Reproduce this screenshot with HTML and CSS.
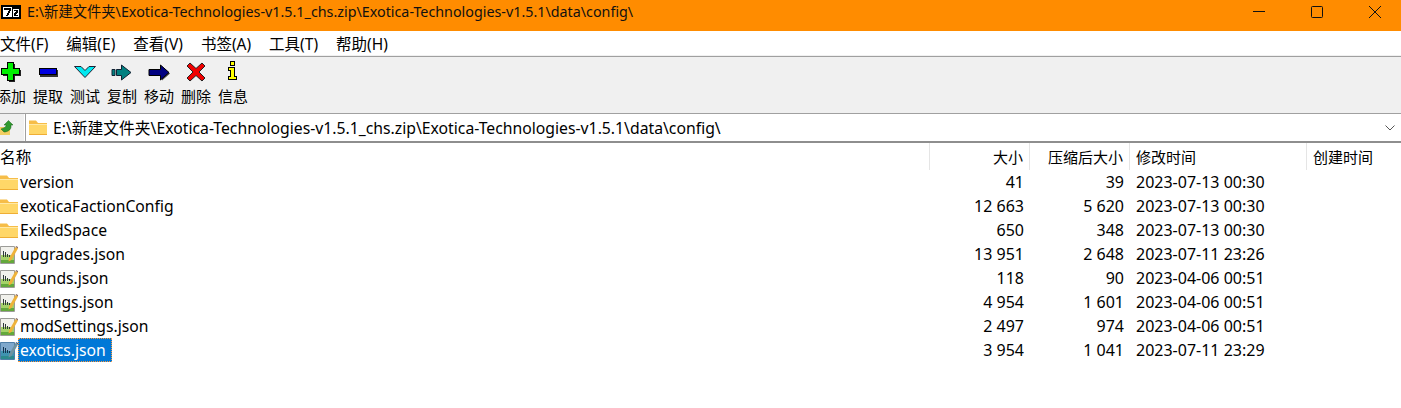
FILE: index.html
```html
<!DOCTYPE html>
<html lang="zh-CN">
<head>
    <meta charset="UTF-8">
    <title>7-Zip</title>
    <link rel="stylesheet" href="styles.css">
</head>
<body>
    <svg class="defs" width="0" height="0">
        <defs>
            <symbol id="folder" viewBox="0 0 18 15">
                <path d="M0 0.500h7l2 2.500h9v12H0z" fill="#f6bd48"/>
                <path d="M0 4h18v11H0z" fill="#ffd768"/>
                <path d="M0 4h18v1H0z" fill="#ffe9a6"/>
                <path d="M0 14h18v1H0z" fill="#efae35"/>
            </symbol>
            <symbol id="jsonfile" viewBox="0 0 18 19">
                <path d="M0.500 1.500h14v17H0.500z" fill="#f1f1ec" stroke="#9c9c98"/>
                <path d="M1 10h13v8H1z" fill="#a4d268"/>
                <path d="M1 15h13v3H1z" fill="#63a83c"/>
                <path d="M3 6h1v6H3zM5 7h1v5H5zM7 9h1v3H7zM9 10h1v2H9z" fill="#2e3a3a"/>
                <path d="M9 13.500L15.500 2l2.500 1.500L11.500 15 8.500 16.500z" fill="#eeb23a"/>
                <path d="M15.500 2l0.600-1 2.400 1.400-0.500 1.100z" fill="#8d6e63"/>
            </symbol>
            <symbol id="jsonfile-sel" viewBox="0 0 18 19">
                <path d="M0.500 1.500h14v17H0.500z" fill="#7fa8cc" stroke="#4f7fa8"/>
                <path d="M1 10h13v8H1z" fill="#3f93b0"/>
                <path d="M1 15h13v3H1z" fill="#2c8a8c"/>
                <path d="M3 6h1v6H3zM5 7h1v5H5zM7 9h1v3H7zM9 10h1v2H9z" fill="#12344e"/>
                <path d="M9 13.500L15.500 2l2.500 1.500L11.500 15 8.500 16.500z" fill="#6f93a0"/>
                <path d="M15.500 2l0.600-1 2.400 1.400-0.500 1.100z" fill="#3e5f80"/>
            </symbol>
        </defs>
    </svg>

    <div class="titlebar">
        <svg class="app-logo pixel" width="20" height="14" viewBox="0 0 20 14">
            <path d="M0 0h20v14H0z" fill="#000"/>
            <path d="M2 2h9v10H2zM12 4h6v8h-6z" fill="#fff"/>
            <path d="M3 3h7v2l-3 6H5l3-6H3zM13 5h4v2l-2 3h2v1h-4V9l2-3h-2z" fill="#000"/>
        </svg>
        <span class="title-text">E:\新建文件夹\Exotica-Technologies-v1.5.1_chs.zip\Exotica-Technologies-v1.5.1\data\config\</span>
        <div class="window-btns">
            <svg width="12" height="12" viewBox="0 0 12 12"><path d="M0 5.500h12" stroke="#111" fill="none"/></svg>
            <svg width="12" height="12" viewBox="0 0 12 12"><rect x="0.500" y="0.500" width="11" height="11" rx="1" stroke="#111" fill="none"/></svg>
            <svg width="12" height="12" viewBox="0 0 12 12"><path d="M0 0l12 12M12 0L0 12" stroke="#111" fill="none"/></svg>
        </div>
    </div>

    <div class="menubar">
        <span>文件(F)</span>
        <span>编辑(E)</span>
        <span>查看(V)</span>
        <span>书签(A)</span>
        <span>工具(T)</span>
        <span>帮助(H)</span>
    </div>

    <div class="toolbar">
        <div class="tool">
            <svg class="pixel" width="22" height="22" viewBox="0 0 22 22"><path d="M9 3h6v6h6v6h-6v6H9v-6H3V9h6z" fill="#222"/><path d="M7.500 1.500h6v6h6v6h-6v6h-6v-6h-6v-6h6z" fill="#00f000" stroke="#000"/></svg>
            <span>添加</span>
        </div>
        <div class="tool">
            <svg class="pixel" width="22" height="22" viewBox="0 0 22 22"><path d="M3 9h18v7H3z" fill="#333"/><path d="M2.500 7.500h17v6h-17z" fill="#0000e0" stroke="#000"/></svg>
            <span>提取</span>
        </div>
        <div class="tool">
            <svg width="22" height="22" viewBox="0 0 22 22"><path d="M0.500 5.500h6.500l4 4 4-4h6.500L11 16.500z" fill="#00e8f0" stroke="#223"/></svg>
            <span>测试</span>
        </div>
        <div class="tool">
            <svg width="22" height="22" viewBox="0 0 22 22"><path d="M1 8.500h3v6H1zM5.500 8.500h5V4l9.500 7.500-9.500 7.500v-4.500h-5z" fill="#008080" stroke="#123"/></svg>
            <span>复制</span>
        </div>
        <div class="tool">
            <svg width="22" height="22" viewBox="0 0 22 22"><path d="M2 10h12V5.500l8 7-8 7V15H2z" fill="#444"/><path d="M1 8.500h11.500V4l8.500 7.500-8.500 7.500v-4.500H1z" fill="#000080" stroke="#000"/></svg>
            <span>移动</span>
        </div>
        <div class="tool">
            <svg width="22" height="22" viewBox="0 0 22 22"><path d="M5 2l6 5.500L17 2l3 3-6 6 6 6-3 3-6-5.500L5 20l-3-3 6-6-6-6z" fill="#f00000" stroke="#222"/></svg>
            <span>删除</span>
        </div>
        <div class="tool">
            <svg class="pixel" width="22" height="22" viewBox="0 0 22 22"><path d="M8.500 0.500h4v4h-4zM6.500 6.500h6v9h2v3h-8v-3h2v-6h-2z" fill="#ffff00" stroke="#000"/></svg>
            <span>信息</span>
        </div>
    </div>

    <div class="addressbar">
        <div class="up-btn">
            <svg width="14" height="16" viewBox="0 0 14 16"><path d="M0 7h4l1 1h5v7H0z" fill="#f2cf62"/><path d="M1 9c2-1 4-1 5-3V5H4l4.500-4.500L13 5h-2v2c0 3-4 5-7 5z" fill="#2f9a2f" stroke="#1b5e1b" stroke-width="0.500"/></svg>
        </div>
        <div class="path-box">
            <svg class="path-icon" width="18" height="15"><use href="#folder"/></svg>
            <span class="path-text">E:\新建文件夹\Exotica-Technologies-v1.5.1_chs.zip\Exotica-Technologies-v1.5.1\data\config\</span>
            <svg class="chevron" width="10" height="6" viewBox="0 0 10 6"><path d="M0.500 0.500L5 5l4.500-4.500" stroke="#555" fill="none"/></svg>
        </div>
    </div>

    <div class="list">
        <div class="row head">
            <div class="c-name">名称</div>
            <div class="c-size">大小</div>
            <div class="c-packed">压缩后大小</div>
            <div class="c-date">修改时间</div>
            <div class="c-created">创建时间</div>
        </div>
        <div class="row">
            <div class="c-name"><svg class="icon" width="18" height="15"><use href="#folder"/></svg><span>version</span></div>
            <div class="c-size">41</div><div class="c-packed">39</div><div class="c-date">2023-07-13 00:30</div><div class="c-created"></div>
        </div>
        <div class="row">
            <div class="c-name"><svg class="icon" width="18" height="15"><use href="#folder"/></svg><span>exoticaFactionConfig</span></div>
            <div class="c-size">12 663</div><div class="c-packed">5 620</div><div class="c-date">2023-07-13 00:30</div><div class="c-created"></div>
        </div>
        <div class="row">
            <div class="c-name"><svg class="icon" width="18" height="15"><use href="#folder"/></svg><span>ExiledSpace</span></div>
            <div class="c-size">650</div><div class="c-packed">348</div><div class="c-date">2023-07-13 00:30</div><div class="c-created"></div>
        </div>
        <div class="row">
            <div class="c-name"><svg class="icon" width="18" height="19"><use href="#jsonfile"/></svg><span>upgrades.json</span></div>
            <div class="c-size">13 951</div><div class="c-packed">2 648</div><div class="c-date">2023-07-11 23:26</div><div class="c-created"></div>
        </div>
        <div class="row">
            <div class="c-name"><svg class="icon" width="18" height="19"><use href="#jsonfile"/></svg><span>sounds.json</span></div>
            <div class="c-size">118</div><div class="c-packed">90</div><div class="c-date">2023-04-06 00:51</div><div class="c-created"></div>
        </div>
        <div class="row">
            <div class="c-name"><svg class="icon" width="18" height="19"><use href="#jsonfile"/></svg><span>settings.json</span></div>
            <div class="c-size">4 954</div><div class="c-packed">1 601</div><div class="c-date">2023-04-06 00:51</div><div class="c-created"></div>
        </div>
        <div class="row">
            <div class="c-name"><svg class="icon" width="18" height="19"><use href="#jsonfile"/></svg><span>modSettings.json</span></div>
            <div class="c-size">2 497</div><div class="c-packed">974</div><div class="c-date">2023-04-06 00:51</div><div class="c-created"></div>
        </div>
        <div class="row selected">
            <div class="c-name"><svg class="icon" width="18" height="19"><use href="#jsonfile-sel"/></svg><span>exotics.json</span></div>
            <div class="c-size">3 954</div><div class="c-packed">1 041</div><div class="c-date">2023-07-11 23:29</div><div class="c-created"></div>
        </div>
    </div>
</body>
</html>
```

FILE: styles.css
```css
html, body {
    margin: 0;
    padding: 0;
    height: 100%;
    overflow: hidden;
}
body {
    font-family: "Noto Sans", "Noto Sans CJK SC", sans-serif;
    font-size: 15px;
    color: #000;
    background-color: #fff;
}
.defs {
    display: block;
    height: 0;
}

.titlebar {
    height: 31px;
    background-color: #ff8c00;
    display: flex;
    align-items: center;
    padding-left: 1px;
    padding-bottom: 7px;
    box-sizing: border-box;
}
.app-logo {
    flex: none;
}
.title-text {
    margin-left: 6px;
    margin-bottom: 3px;
    font-size: 14.3px;
    color: #111;
}
.window-btns {
    margin-left: auto;
    display: flex;
    gap: 46px;
    padding-right: 20px;
}
.window-btns svg {
    display: block;
}

.menubar {
    height: 25px;
    display: flex;
    align-items: center;
    gap: 18px;
    box-sizing: border-box;
    border-bottom: 1px solid #f0f0f0;
    font-size: 15.5px;
    white-space: nowrap;
}
.toolbar {
    height: 58px;
    box-sizing: border-box;
    background-color: #f0f0f0;
    border-top: 1px solid #a0a0a0;
    border-bottom: 1px solid #a0a0a0;
    display: flex;
    padding-top: 4px;
}
.tool {
    flex: none;
    width: 37px;
    display: flex;
    flex-direction: column;
    align-items: center;
    white-space: nowrap;
}
.tool:first-child {
    margin-left: -7.5px;
}
.tool svg {
    display: block;
}
.tool span {
    margin-top: 2px;
    line-height: 22px;
    height: 22px;
}
.pixel {
    shape-rendering: crispEdges;
}

.addressbar {
    height: 27px;
    display: flex;
    background-color: #f0f0f0;
    font-size: 15.75px;
}
.up-btn {
    width: 25px;
    flex: none;
    display: flex;
    align-items: center;
    box-sizing: border-box;
    border-right: 1px solid #fff;
}
.path-box {
    flex: 1;
    background-color: #fff;
    border-left: 1px solid #a0a0a0;
    display: flex;
    align-items: center;
    padding-left: 3px;
    padding-right: 6px;
}
.path-icon {
    flex: none;
}
.path-text {
    margin-left: 6px;
}
.chevron {
    margin-left: auto;
}

.list {
    border-top: 2px solid #8e8e8e;
}
.row {
    display: flex;
    height: 24px;
    line-height: 24px;
    white-space: nowrap;
    font-size: 16px;
}
.row.head {
    height: 27px;
    line-height: 28px;
    font-size: 15px;
}
.row.head > div {
    box-sizing: border-box;
    border-right: 1px solid #e5e5e5;
    height: 27px;
}
.row.head > .c-created {
    border-right: 0;
}
.c-name {
    width: 930px;
    flex: none;
    display: flex;
    align-items: center;
    box-sizing: border-box;
    font-size: 15.7px;
}
.c-size, .c-packed {
    width: 100px;
    flex: none;
    text-align: right;
    padding-right: 6px;
    box-sizing: border-box;
}
.c-date {
    width: 177px;
    flex: none;
    padding-left: 6px;
    box-sizing: border-box;
}
.c-created {
    flex: 1;
    padding-left: 6px;
}
.icon {
    flex: none;
}
.c-name span {
    padding: 0 2px;
    height: 24px;
    line-height: 24px;
    box-sizing: border-box;
}
.selected .c-name span {
    padding-right: 6px;
    background-color: #0078d7;
    color: #fff;
    outline: 1px dotted #ff9a3c;
    outline-offset: -1px;
}
```
